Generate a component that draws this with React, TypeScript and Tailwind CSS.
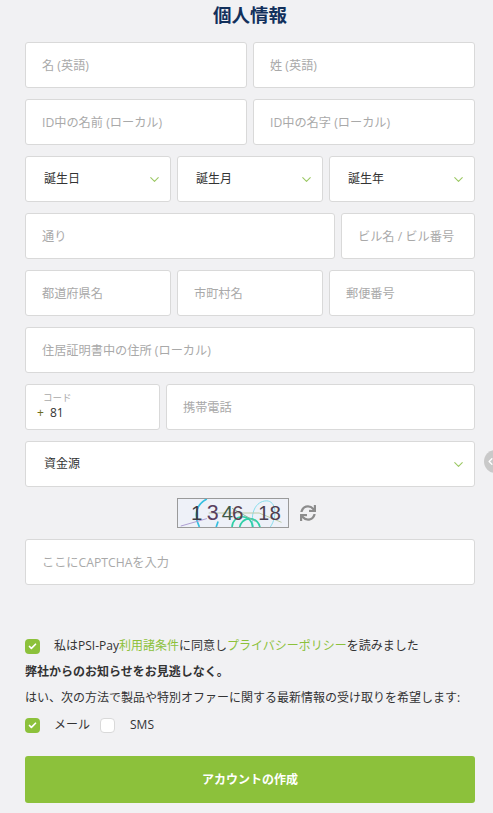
import { ChevronDown, Check } from 'lucide-react';
import { FaSync } from 'react-icons/fa';

const fontStack = 'font-["Open_Sans","Noto_Sans_CJK_JP",sans-serif]';

function Field({ placeholder, className = '' }: { placeholder: string; className?: string }) {
  return (
    <input
      placeholder={placeholder}
      className={`h-[46px] min-w-0 rounded-[3px] border border-[#d9d9d9] bg-white pl-[16px] pr-2 text-[12.2px] outline-none placeholder:text-[#a9a9a9] ${className}`}
    />
  );
}

function SelectBox({ label, className = '' }: { label: string; className?: string }) {
  return (
    <div className={`flex h-[46px] min-w-0 items-center justify-between rounded-[3px] border border-[#d9d9d9] bg-white pl-[18px] pr-[8px] text-[12px] text-[#333] ${className}`}>
      <span>{label}</span>
      <ChevronDown className="h-[15px] w-[15px] text-[#9cc864]" strokeWidth={1.75} />
    </div>
  );
}

function CheckBox({ checked }: { checked: boolean }) {
  return (
    <span className={`flex h-[15px] w-[15px] shrink-0 items-center justify-center rounded-[4px] ${checked ? 'bg-[#8cc13b]' : 'border border-[#d9d9d9] bg-white'}`}>
      {checked && <Check className="h-[9px] w-[9px] text-white" strokeWidth={4.5} />}
    </span>
  );
}

function Captcha() {
  return (
    <svg width="112" height="30" viewBox="0 0 112 30" className="border border-[#9a9a9a] bg-[#eef1f8]">
      <path d="M28 0C16 6 14 18 20 30" fill="none" stroke="#35bfe0" strokeWidth="1.8" />
      <path d="M40 24L38 30" fill="none" stroke="#35bfe0" strokeWidth="1.8" />
      <path d="M78 30C74 16 80 2 92 2C102 2 104 18 96 30" fill="none" stroke="#7fdcec" strokeWidth="1" />
      <circle cx="66" cy="30" r="11" fill="none" stroke="#30d0a8" strokeWidth="1.8" />
      <circle cx="74" cy="32" r="11" fill="none" stroke="#30d0a8" strokeWidth="1.8" />
      <path d="M0 29L28 21" stroke="#a898d0" strokeWidth="1" />
      <path d="M30 15H84L108 25" fill="none" stroke="#b8c8a0" strokeWidth="1" />
      <path d="M55 10L80 24" stroke="#80b898" strokeWidth="1" />
      <text x="11" y="22" fontSize="22" fontFamily="Liberation Sans" fill="#3c3c44">1</text>
      <text x="28" y="23" fontSize="23" fontFamily="Liberation Sans" fill="#5a4060">3</text>
      <text x="44" y="22" fontSize="22" fontFamily="Liberation Sans" fill="#3f5a48">4</text>
      <text x="55" y="22" fontSize="22" fontFamily="Liberation Sans" fill="#5a4050">6</text>
      <text x="83" y="22" fontSize="21" fontFamily="Liberation Sans" fill="#4a4050">1</text>
      <text x="95" y="22" fontSize="22" fontFamily="Liberation Sans" fill="#504050">8</text>
    </svg>
  );
}

export default function App() {
  return (
    <div className={`relative h-[813px] w-[493px] overflow-hidden bg-[#f1f1f3] pl-[25px] pr-[18px] ${fontStack}`}>
      <h1 className="h-[42px] pt-[2px] text-center text-[18.5px] font-bold leading-[26px] text-[#12305c]">個人情報</h1>

      <div className="flex flex-col gap-[11px]">
        <div className="flex gap-[6px]">
          <Field placeholder="名 (英語)" className="flex-1" />
          <Field placeholder="姓 (英語)" className="flex-1" />
        </div>
        <div className="flex gap-[6px]">
          <Field placeholder="ID中の名前 (ローカル)" className="flex-1" />
          <Field placeholder="ID中の名字 (ローカル)" className="flex-1" />
        </div>
        <div className="flex gap-[6px]">
          <SelectBox label="誕生日" className="flex-1" />
          <SelectBox label="誕生月" className="flex-1" />
          <SelectBox label="誕生年" className="flex-1" />
        </div>
        <div className="flex gap-[6px]">
          <Field placeholder="通り" className="flex-1" />
          <Field placeholder="ビル名 / ビル番号" className="w-[134px]" />
        </div>
        <div className="flex gap-[6px]">
          <Field placeholder="都道府県名" className="flex-1" />
          <Field placeholder="市町村名" className="flex-1" />
          <Field placeholder="郵便番号" className="flex-1" />
        </div>
        <Field placeholder="住居証明書中の住所 (ローカル)" />
        <div className="flex gap-[6px]">
          <div className="flex h-[46px] w-[135px] flex-col rounded-[3px] border border-[#d9d9d9] bg-white pl-[11px] pt-[7px]">
            <span className="pl-[6px] text-[9.5px] leading-[12px] text-[#a9a9a9]">コード</span>
            <span className="flex items-center gap-[6px] text-[12px] leading-[18px] text-[#333]">
              <span className="text-[#6b6b20]">+</span>81
            </span>
          </div>
          <Field placeholder="携帯電話" className="flex-1" />
        </div>
        <SelectBox label="資金源" />
        <div className="flex h-[30px] items-center justify-center gap-[11px] pr-[7px]">
          <Captcha />
          <FaSync className="h-[16px] w-[16px] text-[#8c8c8c]" />
        </div>
        <Field placeholder="ここにCAPTCHAを入力" />
      </div>

      <div className="mt-[52px] flex items-center gap-[14px] text-[12px] leading-[18px] text-[#333]">
        <CheckBox checked />
        <span>
          私はPSI-Pay<span className="text-[#8cc13b]">利用諸条件</span>に同意し<span className="text-[#8cc13b]">プライバシーポリシー</span>を読みました
        </span>
      </div>
      <p className="mt-[8px] text-[12px] font-bold leading-[18px] text-[#333]">弊社からのお知らせをお見逃しなく。</p>
      <p className="mt-[8px] whitespace-nowrap text-[12px] leading-[18px] text-[#333]">はい、次の方法で製品や特別オファーに関する最新情報の受け取りを希望します:</p>
      <div className="mt-[9px] flex items-center text-[12px] leading-[18px] text-[#333]">
        <CheckBox checked />
        <span className="ml-[14px]">メール</span>
        <span className="ml-[10px]"><CheckBox checked={false} /></span>
        <span className="ml-[15px]">SMS</span>
      </div>
      <button className="mt-[22px] h-[47px] w-full rounded-[3px] bg-[#8cc13b] text-[12px] font-bold text-white">アカウントの作成</button>

      <div className="absolute left-[484px] top-[450px] h-[23px] w-[23px] rounded-full bg-[#c9c9c9]">
        <ChevronDown className="absolute left-[1px] top-[6px] h-[11px] w-[11px] rotate-90 text-white" strokeWidth={3} />
      </div>
    </div>
  );
}
